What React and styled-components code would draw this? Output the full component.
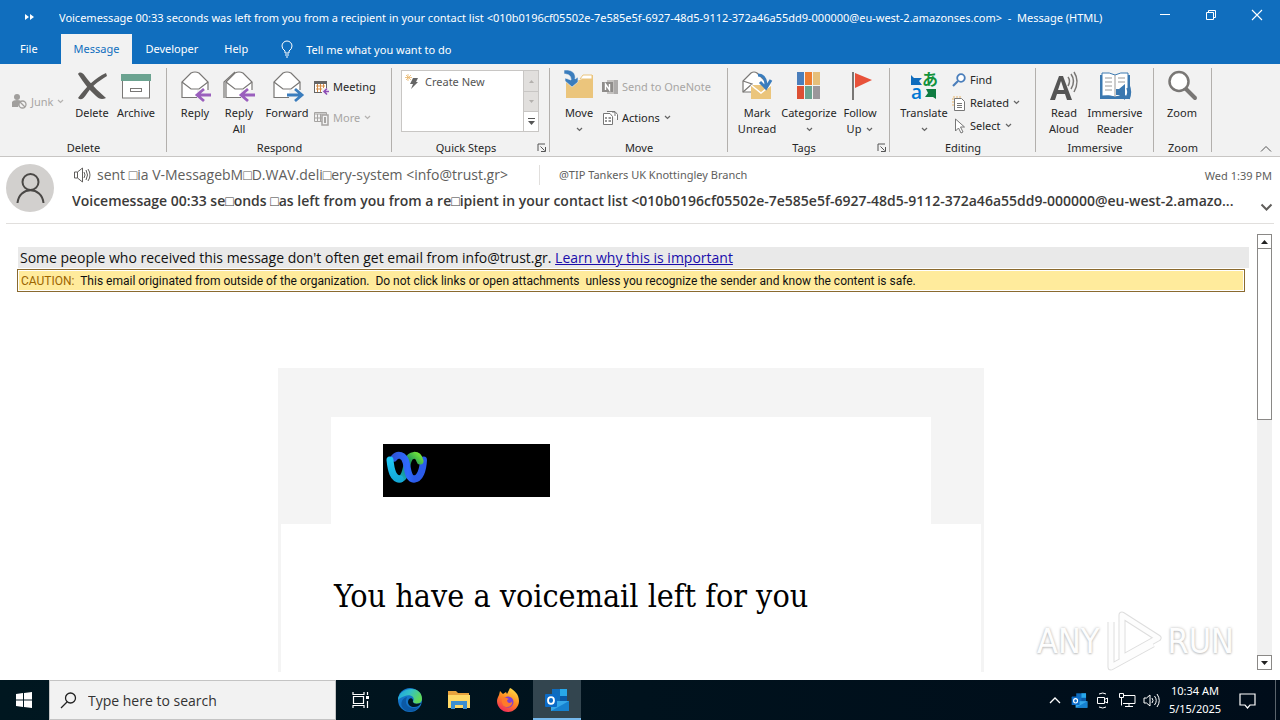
import React from "react";
import styled, { createGlobalStyle } from "styled-components";

const ui = `"Noto Sans", "Open Sans", sans-serif`;
const mail = `"Open Sans", "Noto Sans", sans-serif`;

const GlobalStyle = createGlobalStyle`
  *, *::before, *::after { box-sizing: border-box; }
  body { margin: 0; background: #fff; font-family: ${ui}; font-size: 11px; color: #262626; }
  button, input { font: inherit; color: inherit; background: none; border: 0; padding: 0; margin: 0; }
  svg { display: block; flex: none; overflow: visible; }
`;

const Page = styled.div`
  min-height: 100vh;
  display: flex;
  flex-direction: column;
`;

/* Title bar and tabs */
const TitleBar = styled.header`
  display: flex;
  height: 34px;
  background: #106ebe;
  color: #fff;
`;
const QuickAccess = styled.button`
  width: 59px;
  display: grid;
  place-items: center;
`;
const Title = styled.h1`
  flex: 1;
  min-width: 0;
  margin: 0;
  font-size: 11px;
  font-weight: 400;
  line-height: 36px;
  white-space: pre;
  overflow: hidden;
`;
const WindowButton = styled.button`
  width: 46px;
  height: 30px;
  display: grid;
  place-items: center;
`;
const Tabs = styled.nav`
  display: flex;
  height: 30px;
  padding-left: 7px;
  background: #106ebe;
  color: #fff;
`;
const Tab = styled.button`
  padding: 0 13px;
  line-height: 30px;
  background: ${(p) => (p.$active ? "#f2f2f2" : "transparent")};
  color: ${(p) => (p.$active ? "#106ebe" : "#fff")};
  margin-left: ${(p) => (p.$active ? "10px" : "0")};
`;
const TellMe = styled.button`
  display: flex;
  align-items: center;
  gap: 13px;
  padding: 0 20px;
`;

/* Ribbon */
const Ribbon = styled.section`
  display: flex;
  height: 93px;
  background: #f2f2f2;
  border-bottom: 1px solid #c8c6c4;
`;
const Group = styled.section`
  position: relative;
  display: flex;
  flex-direction: column;
  width: ${(p) => p.$width}px;
  padding-top: 4px;
  &::after {
    content: "";
    position: absolute;
    right: 0;
    top: 4px;
    bottom: 4px;
    width: 1px;
    background: #b3b0ad;
  }
`;
const GroupBody = styled.div`
  display: flex;
  flex: 1;
  padding-left: ${(p) => p.$inset || 6}px;
`;
const GroupFooter = styled.div`
  display: flex;
  height: 16px;
  line-height: 16px;
  padding: 0 3px;
`;
const GroupName = styled.h2`
  flex: 1;
  margin: 0;
  font-size: 11px;
  font-weight: 400;
  text-align: center;
`;
const Launcher = styled.button`
  display: grid;
  place-items: center;
`;
const BigButton = styled.button`
  width: ${(p) => p.$width || 44}px;
  display: flex;
  flex-direction: column;
  align-items: center;
  padding-top: 2px;
  line-height: 16px;
  white-space: nowrap;
  > svg { margin-bottom: 3px; }
`;
const SecondLine = styled.span`
  display: flex;
  align-items: center;
  gap: 5px;
  height: 16px;
`;
const Stack = styled.div`
  display: flex;
  flex-direction: column;
  padding: ${(p) => (p.$dense ? "0" : "3px 0")};
`;
const SmallButton = styled.button`
  display: flex;
  align-items: center;
  gap: 4px;
  height: ${(p) => (p.$dense ? 23 : 31)}px;
  color: ${(p) => (p.disabled ? "#a8a6a4" : "inherit")};
  white-space: nowrap;
`;
const JunkCell = styled.div`
  display: flex;
  align-items: center;
  padding-bottom: 6px;
  width: 59px;
`;
const Gallery = styled.div`
  display: flex;
  width: 138px;
  height: 62px;
  margin-top: 2px;
  background: #fff;
  border: 1px solid #c8c6c4;
`;
const GalleryItem = styled.button`
  flex: 1;
  display: flex;
  align-items: center;
  gap: 4px;
  height: 21px;
  padding-left: 3px;
  color: #555;
`;
const GallerySteps = styled.div`
  display: grid;
  grid-template-rows: repeat(3, 1fr);
  width: 15px;
  border-left: 1px solid #c8c6c4;
`;
const GalleryStep = styled.button`
  display: grid;
  place-items: center;
  background: ${(p) => (p.disabled ? "#e1dfdd" : "#fff")};
  & + & { border-top: 1px solid #c8c6c4; }
`;
const Collapse = styled.button`
  align-self: flex-end;
  margin-left: auto;
  padding: 0 8px 3px;
`;

/* Message header */
const MessageHeader = styled.section`
  display: flex;
  gap: 18px;
  margin-left: 6px;
  margin-right: 6px;
  height: 67px;
  border-bottom: 1px solid #e1dfdd;
`;
const Avatar = styled.div`
  width: 48px;
  height: 48px;
  margin-top: 7px;
  border-radius: 50%;
  background: #d2d0ce;
  display: grid;
  place-items: center;
`;
const HeaderText = styled.div`
  flex: 1;
  min-width: 0;
  padding-top: 5px;
`;
const HeaderLine = styled.div`
  display: flex;
  align-items: center;
  height: 26px;
`;
const Sender = styled.span`
  margin-left: 5px;
  font: 14px/24px ${mail};
  color: #605e5c;
  white-space: nowrap;
`;
const Recipient = styled.span`
  margin-left: 31px;
  padding-left: 19px;
  line-height: 20px;
  border-left: 1px solid #e1dfdd;
  color: #605e5c;
`;
const Sent = styled.time`
  margin-left: auto;
  padding-right: 2px;
  color: #605e5c;
`;
const Subject = styled.h2`
  flex: 1;
  min-width: 0;
  margin: 0;
  font: 600 14px/26px ${mail};
  color: #3b3a39;
  white-space: nowrap;
  overflow: hidden;
  text-overflow: ellipsis;
`;
const Expand = styled.button`
  margin-left: 12px;
  padding: 13px 1px 0 0;
`;

/* Message body */
const Reading = styled.main`
  position: relative;
  flex: 1;
  display: flex;
  padding-bottom: 8px;
`;
const MailBody = styled.article`
  flex: 1;
  min-width: 0;
  display: flex;
  flex-direction: column;
  padding: 23px 8px 0 17px;
`;
const SafetyTip = styled.p`
  margin: 0 0 0 1px;
  padding: 1px 0 0 2px;
  background: #e9e9e9;
  color: #111;
  font: 14px/20px ${mail};
  a { color: #1a0dab; }
`;
const Caution = styled.p`
  margin: 1px 4px 0 0;
  padding: 1px;
  border: 1px solid #8a6a2f;
  color: #111;
  font: 12px/18px Roboto, sans-serif;
  white-space: pre-wrap;
`;
const CautionFill = styled.span`
  display: block;
  padding: 1px 0 0 2px;
  background: #ffeb9c;
`;
const CautionLabel = styled.span`
  color: #9c6500;
`;
const Card = styled.section`
  flex: 1;
  align-self: center;
  width: 706px;
  max-width: 100%;
  margin-top: 76px;
  margin-right: 4px;
  display: flex;
  flex-direction: column;
  background: #f4f4f4;
`;
const Banner = styled.div`
  margin: 49px 53px 0;
  padding: 27px 52px;
  background: #fff;
`;
const Logo = styled.div`
  width: 167px;
  height: 53px;
  padding: 6px 3px;
  background: #000;
`;
const CardBody = styled.div`
  flex: 1;
  margin: 0 3px;
  padding: 48px 53px 52px;
  background: #fff;
`;
const Headline = styled.h3`
  margin: 0;
  font: 400 32px/48px "DejaVu Serif Condensed", "DejaVu Serif", serif;
  color: #000;
`;
const ScrollBar = styled.div`
  display: flex;
  flex-direction: column;
  width: 15px;
  margin: 10px 8px 2px 0;
  background: #f1f1f1;
`;
const ScrollArrow = styled.button`
  display: grid;
  place-items: center;
  height: 15px;
  background: #fff;
  border: 1px solid #8a8886;
`;
const Track = styled.div`
  flex: 1;
`;
const Thumb = styled.div`
  height: 42%;
  background: #fff;
  border: 1px solid #8a8886;
  border-top: 0;
`;
const Watermark = styled.div`
  position: absolute;
  right: 46px;
  bottom: 8px;
  display: flex;
  align-items: center;
  gap: 5px;
  font: 34px/60px "DejaVu Sans Condensed", "DejaVu Sans", sans-serif;
  color: #fdfdfd;
  text-shadow: 0 0 3px #bbb, 0 1px 2px #ccc;
`;

/* Taskbar */
const Taskbar = styled.footer`
  display: flex;
  height: 40px;
  background: linear-gradient(90deg, #001720, #000d1a);
  color: #fff;
`;
const TaskButton = styled.button`
  width: 48px;
  margin-right: 1px;
  display: grid;
  place-items: center;
  background: ${(p) => (p.$active ? "#33454f" : "transparent")};
  box-shadow: ${(p) => (p.$active ? "inset 0 -2px #76b9ed" : "none")};
`;
const SearchBox = styled.label`
  display: flex;
  align-items: center;
  gap: 11px;
  width: 287px;
  margin-right: 1px;
  padding-left: 10px;
  background: #f2f2f2;
  border: 1px solid #c4c4c4;
  color: #222;
`;
const SearchInput = styled.input`
  flex: 1;
  min-width: 0;
  height: 36px;
  font: 14px/20px ${mail};
  &::placeholder { color: #333; opacity: 1; }
`;
const Tray = styled.div`
  display: flex;
  margin-left: auto;
  padding-right: 4px;
`;
const TrayButton = styled.button`
  width: ${(p) => p.$width || 24}px;
  display: grid;
  place-items: center;
`;
const Clock = styled.time`
  width: 64px;
  padding-top: 2px;
  line-height: 18px;
  text-align: center;
`;
const ShowDesktop = styled.div`
  width: 9px;
  border-right: 1px solid #5a646c;
`;

/* Icons */
const Down = ({ c = "#666", w = 7 }) => (
  <svg width={w} height="5" viewBox="0 0 7 5"><path d="M1 1l2.5 2.4L6 1" fill="none" stroke={c} strokeWidth="1.3" /></svg>
);
const Ico = ({ s = 32, children, ...r }) => (
  <svg width={s} height={s} viewBox={`0 0 ${s} ${s}`} fill="none" {...r}>{children}</svg>
);
const DeleteIcon = () => (
  <Ico><path d="M2 4c2-3 5-1 7 2 6 8 12 14 21 22-4 2-7 1-10-2C13 20 8 13 2 4z" fill="#5d5b59" /><path d="M30 3C19 8 10 17 2 28c3 3 6 0 8-3C15 17 21 12 31 6z" fill="#5d5b59" /></Ico>
);
const ArchiveIcon = () => (
  <Ico><rect x="2.5" y="9" width="27" height="19" fill="#fff" stroke="#797775" /><rect x="1" y="4" width="30" height="7" fill="#6ba390" /><rect x="10.5" y="18.5" width="11" height="3" stroke="#797775" /></Ico>
);
const Envelope = ({ all, color, back }) => (
  <Ico>
    {all && <path d="M1 28V12L12 2" stroke="#797775" strokeWidth="1.2" />}
    <path d="M3 12v15.5h26V12L20 3q-4-2-8 0z" fill="#fff" stroke="#797775" strokeWidth="1.2" />
    <path d="M3 12l9 7h8l9-7" stroke="#797775" strokeWidth="1.2" />
    <path d="M18 20h14v10H18z" fill="#f2f2f2" />
    {back
      ? <path d="M32 25H19m6-6l-7 6 7 6" stroke={color} strokeWidth="2.8" />
      : <path d="M16 25h14m-6-6l7 6-7 6" stroke={color} strokeWidth="2.8" />}
  </Ico>
);
const JunkIcon = () => (
  <Ico s={16}><circle cx="6" cy="4" r="3" fill="#a19f9d" /><path d="M1 14V9q1-2 5-2 3 0 4 1l-3 6z" fill="#a19f9d" /><circle cx="11.5" cy="11.5" r="3.5" fill="#f2f2f2" stroke="#a19f9d" strokeWidth="1.3" /><path d="M9 9l5 5" stroke="#a19f9d" strokeWidth="1.3" /></Ico>
);
const MeetingIcon = () => (
  <Ico s={16}><rect x="1.5" y="2.5" width="12" height="11" fill="#fff" stroke="#666" /><path d="M1 2h13v3H1z" fill="#666" /><path d="M3 7h9M3 10h6M4.5 5v8M7.5 5v8M10.5 5v5" stroke="#d68c45" /><path d="M9 9h7v7H9z" fill="#f2f2f2" /><path d="M16 12.5h-5m3-3l-3 3 3 3" stroke="#8e4db5" strokeWidth="1.6" /></Ico>
);
const MoreIcon = () => (
  <Ico s={16}><path d="M1.5 2.5h12v9h-12zM1 4h13M1 8h8M4.5 4v7M7.5 4v7" stroke="#a6a4a2" /><path d="M9 5h6v10H9z" fill="#f2f2f2" stroke="#a6a4a2" strokeWidth="1.5" /><path d="M11 7h2v6h-2z" fill="#a6a4a2" /></Ico>
);
const FlashIcon = () => (
  <Ico s={16}><path d="M3 0v7M0 3.5h7M1 1l5 5M6 1L1 6" stroke="#e8b56a" strokeWidth=".8" /><path d="M8 4h5l-2 4h2l-7 7 2-5H5z" fill="#666" /></Ico>
);
const MoveIcon = () => (
  <Ico><path d="M3 28V10h15l4-5h8v23z" fill="#ebc57c" /><path d="M20 5h9v4H17z" fill="#fff" stroke="#ebc57c" /><path d="M1 0h4c6 1 8 5 7 9l3-2v5l-6 5-7-6V8l6 2c0-4-2-6-7-6z" fill="#3b7dbd" stroke="#f2f2f2" strokeWidth=".6" /></Ico>
);
const OneNoteIcon = () => (
  <Ico s={16}><path d="M5 1h11v14H5z" fill="#c3c1bf" /><path d="M12 1h4v14h-4z" fill="#adabaa" /><path d="M0 3h11v10H0z" fill="#8f8d8b" /><path d="M3.5 11V5l4 6V5" stroke="#fff" strokeWidth="1.4" /></Ico>
);
const ActionsIcon = () => (
  <Ico s={16}><path d="M5 1.5h8l2.5 3V10M1.5 3.5H8l2.5 3v8h-9z" fill="#fff" stroke="#777" /><path d="M3 8h2m1.5 0H9M3 11h2m1.5 0H9" stroke="#777" strokeWidth="1.5" /><path d="M10 2h3v4" stroke="#777" /></Ico>
);
const MarkIcon = () => (
  <Ico><path d="M2 22V11L10 3q3-2 6 0l9 9v10z" fill="#fff" stroke="#797775" strokeWidth="1.2" /><path d="M2 22l9-8-9-3" stroke="#797775" strokeWidth="1.2" /><path d="M10 15h20v14H10z" fill="#ebc57c" /><path d="M10 15l10 8 10-8" stroke="#fff" strokeWidth="1.5" /><path d="M17 5c6 0 8 4 8 12M19 12l6 6 5-8" stroke="#3b7dbd" strokeWidth="3" /></Ico>
);
const CategorizeIcon = () => (
  <Ico>{["#4a7ebb 4 2", "#ed7d31 12 2", "#e6bf7a 20 2", "#dc5034 4 16", "#6ba390 12 16", "#9b979b 20 16"].map((v) => { const [f, x, y] = v.split(" "); return <rect key={v} x={x} y={y} width="7" height="13" fill={f} />; })}</Ico>
);
const FlagIcon = () => (
  <Ico><path d="M9 2v28" stroke="#797775" strokeWidth="2" /><path d="M11 3l17 7-17 8z" fill="#e8523a" /></Ico>
);
const TranslateIcon = () => (
  <Ico>
    <path d="M3 5l3 3h8l-3 3 3 4H3z" fill="#0f6cbd" /><path d="M28 29l-3-2h-8l3-4-2-4h10z" fill="#107c41" />
    <text x="3" y="29" fontFamily="Open Sans" fontSize="19" fontWeight="600" fill="#0078d4">a</text>
    <text x="14" y="15" fontFamily="Noto Sans CJK JP" fontSize="16" fontWeight="700" fill="#13923b">あ</text>
  </Ico>
);
const FindIcon = () => (
  <Ico s={14}><circle cx="9" cy="5" r="3.8" fill="#fff" stroke="#4a7ebb" strokeWidth="1.8" /><path d="M6 8l-5 5" stroke="#4a7ebb" strokeWidth="2.2" /></Ico>
);
const RelatedIcon = () => (
  <Ico s={14}><path d="M1 10V1h8" stroke="#e8b56a" strokeDasharray="2 1" /><path d="M2.5 2.5h7l3 3v9h-10z" fill="#fff" stroke="#777" /><path d="M5 7.5h5m-5 2h5m-5 2h5" stroke="#777" /></Ico>
);
const SelectIcon = () => (
  <Ico s={14}><path d="M3.5 0v12l3-3 2.5 5 2-1-2.5-5h4z" fill="#fff" stroke="#777" /></Ico>
);
const ReadIcon = () => (
  <Ico><path d="M2 30L11 6h4l9 24h-5l-2-6H9l-2 6zm8-10h6l-3-9z" fill="#555" /><path d="M20 7q3 4 0 9M23 4q5 7 0 15M26 2q6 9 0 20" stroke="#797775" strokeWidth="1.5" /></Ico>
);
const ReaderIcon = () => (
  <Ico><path d="M1 5h30v24H1z" fill="#3b78b0" /><path d="M3 3q8-1 13 2 5-3 13-2v23q-8-1-13 1-5-2-13-1z" fill="#fff" stroke="#3b78b0" /><path d="M16 5v22M6 8h7M6 12h7M6 16h7M6 20h7M19 8h7M19 12h7" stroke="#999" /><path d="M17 19h3l6-5v16l-6-5h-3z" fill="#3b78b0" /><path d="M28 18q2 4 0 8M30 15q3 7 0 14" stroke="#3b78b0" strokeWidth="1.4" /></Ico>
);
const ZoomIcon = () => (
  <Ico><path d="M19 18l10 10" stroke="#797775" strokeWidth="4" strokeLinecap="round" /><circle cx="13" cy="11.5" r="9.5" fill="#fff" stroke="#797775" strokeWidth="2.5" /></Ico>
);
const LauncherIcon = () => (
  <Ico s={10}><path d="M1 8V1h7" stroke="#555" /><path d="M3.5 3.5l4 4M8.5 4v4.5H4" stroke="#555" /></Ico>
);
const OutlookIcon = ({ size = 26 }) => (
  <svg width={size} height={size} viewBox="0 0 26 26">
    <path d="M8 2h15v14H8z" fill="#0f6cbd" /><path d="M16 2h7v7h-7z" fill="#28a8ea" /><path d="M16 9h7v6h-7z" fill="#0a58a6" /><path d="M7 14h18v10H7z" fill="#35a7e8" /><path d="M7 24l18-10v10z" fill="#1681cf" />
    <rect x="1" y="7" width="12" height="13" rx="1" fill="#0b6bc7" /><ellipse cx="7" cy="13.5" rx="3" ry="3.3" fill="none" stroke="#fff" strokeWidth="1.8" />
  </svg>
);

const Big = ({ icon, label, second, menu, width }) => (
  <BigButton $width={width}>
    {icon}
    <span>{label}</span>
    {(second || menu) && <SecondLine>{second}{menu && <Down />}</SecondLine>}
  </BigButton>
);
const Small = ({ icon, label, menu, dense, disabled }) => (
  <SmallButton $dense={dense} disabled={disabled}>
    {icon}{label}{menu && <Down c={disabled ? "#b5b3b1" : "#666"} />}
  </SmallButton>
);
const RibbonGroup = ({ name, width, inset, launcher, children }) => (
  <Group $width={width} aria-label={name}>
    <GroupBody $inset={inset}>{children}</GroupBody>
    <GroupFooter>
      <GroupName>{name}</GroupName>
      {launcher && <Launcher aria-label={`${name} options`}><LauncherIcon /></Launcher>}
    </GroupFooter>
  </Group>
);

export default function App() {
  return (
    <Page>
      <GlobalStyle />
      <TitleBar>
        <QuickAccess aria-label="Customize toolbar">
          <svg width="9" height="6" viewBox="0 0 9 6"><path d="M0 0l4 3-4 3zM5 0l4 3-4 3z" fill="#fff" /></svg>
        </QuickAccess>
        <Title>{"Voicemessage 00:33 seconds was left from you from a recipient in your contact list <010b0196cf05502e-7e585e5f-6927-48d5-9112-372a46a55dd9-000000@eu-west-2.amazonses.com>  -  Message (HTML)"}</Title>
        <WindowButton aria-label="Minimize"><Ico s={12}><path d="M1 5.5h10" stroke="#fff" /></Ico></WindowButton>
        <WindowButton aria-label="Restore"><Ico s={12}><path d="M1.5 3.5h7v7h-7zM3.5 3V1.5h7v7H9" stroke="#fff" /></Ico></WindowButton>
        <WindowButton aria-label="Close"><Ico s={12}><path d="M1 1l10 10M11 1L1 11" stroke="#fff" strokeWidth="1.1" /></Ico></WindowButton>
      </TitleBar>
      <Tabs>
        <Tab>File</Tab>
        <Tab $active>Message</Tab>
        <Tab>Developer</Tab>
        <Tab>Help</Tab>
        <TellMe>
          <svg width="12" height="18" viewBox="0 0 12 18" fill="none" stroke="#fff"><path d="M4 13v-2Q1 9 1 6a5 5 0 0110 0q0 3-3 5v2zM4 15h4M5 17h2" /></svg>
          Tell me what you want to do
        </TellMe>
      </Tabs>

      <Ribbon>
        <RibbonGroup name="Delete" width={167} inset={11}>
          <JunkCell><Small icon={<JunkIcon />} label="Junk" menu disabled /></JunkCell>
          <Big icon={<DeleteIcon />} label="Delete" />
          <Big icon={<ArchiveIcon />} label="Archive" />
        </RibbonGroup>
        <RibbonGroup name="Respond" width={225}>
          <Big icon={<Envelope back color="#9a5fbd" />} label="Reply" />
          <Big icon={<Envelope back all color="#9a5fbd" />} label="Reply" second="All" />
          <Big icon={<Envelope color="#3b7dbd" />} label="Forward" width={52} />
          <Stack>
            <Small icon={<MeetingIcon />} label="Meeting" />
            <Small icon={<MoreIcon />} label="More" menu disabled />
          </Stack>
        </RibbonGroup>
        <RibbonGroup name="Quick Steps" width={158} inset={9} launcher>
          <Gallery>
            <GalleryItem><FlashIcon />Create New</GalleryItem>
            <GallerySteps>
              <GalleryStep disabled aria-label="Previous"><svg width="5" height="3" viewBox="0 0 5 3"><path d="M0 3l2.5-3L5 3z" fill="#b3b0ad" /></svg></GalleryStep>
              <GalleryStep disabled aria-label="Next"><svg width="5" height="3" viewBox="0 0 5 3"><path d="M0 0l2.5 3L5 0z" fill="#b3b0ad" /></svg></GalleryStep>
              <GalleryStep aria-label="All quick steps"><svg width="7" height="7" viewBox="0 0 7 7"><path d="M0 0h7v1H0zM0 3h7L3.5 7z" fill="#555" /></svg></GalleryStep>
            </GallerySteps>
          </Gallery>
        </RibbonGroup>
        <RibbonGroup name="Move" width={178}>
          <Big icon={<MoveIcon />} label="Move" menu width={46} />
          <Stack>
            <Small icon={<OneNoteIcon />} label="Send to OneNote" disabled />
            <Small icon={<ActionsIcon />} label="Actions" menu />
          </Stack>
        </RibbonGroup>
        <RibbonGroup name="Tags" width={162} launcher>
          <Big icon={<MarkIcon />} label="Mark" second="Unread" width={46} />
          <Big icon={<CategorizeIcon />} label="Categorize" menu width={58} />
          <Big icon={<FlagIcon />} label="Follow" second="Up" menu />
        </RibbonGroup>
        <RibbonGroup name="Editing" width={146}>
          <Big icon={<TranslateIcon />} label="Translate" menu width={56} />
          <Stack $dense>
            <Small dense icon={<FindIcon />} label="Find" />
            <Small dense icon={<RelatedIcon />} label="Related" menu />
            <Small dense icon={<SelectIcon />} label="Select" menu />
          </Stack>
        </RibbonGroup>
        <RibbonGroup name="Immersive" width={118}>
          <Big icon={<ReadIcon />} label="Read" second="Aloud" />
          <Big icon={<ReaderIcon />} label="Immersive" second="Reader" width={58} />
        </RibbonGroup>
        <RibbonGroup name="Zoom" width={58}>
          <Big icon={<ZoomIcon />} label="Zoom" />
        </RibbonGroup>
        <Collapse aria-label="Collapse ribbon"><svg width="12" height="8" viewBox="0 0 12 8" fill="none" stroke="#555"><path d="M1 6.5l5-5 5 5" /></svg></Collapse>
      </Ribbon>

      <MessageHeader>
        <Avatar>
          <svg width="29" height="30" viewBox="0 0 29 30" fill="none" stroke="#4a4846" strokeWidth="2"><circle cx="14.5" cy="9" r="8" /><path d="M1.5 30C3 13 26 13 27.5 30" /></svg>
        </Avatar>
        <HeaderText>
          <HeaderLine>
            <svg width="20" height="16" viewBox="0 0 20 16" fill="none" stroke="#605e5c"><path d="M2.5 5v6h3l5 4V1l-5 4zM5.5 5v6M12 5q2 3 0 6M14 3q3 5 0 10M16 2q4 6 0 12" /></svg>
            <Sender>sent □ia V-MessagebM□D.WAV.deli□ery-system &lt;info@trust.gr&gt;</Sender>
            <Recipient>@TIP Tankers UK Knottingley Branch</Recipient>
            <Sent>Wed 1:39 PM</Sent>
          </HeaderLine>
          <HeaderLine>
            <Subject>Voicemessage 00:33 se□onds □as left from you from a re□ipient in your contact list &lt;010b0196cf05502e-7e585e5f-6927-48d5-9112-372a46a55dd9-000000@eu-west-2.amazo...</Subject>
            <Expand aria-label="Expand header"><svg width="13" height="9" viewBox="0 0 13 9" fill="none" stroke="#605e5c" strokeWidth="2"><path d="M1.5 1.5l5 5 5-5" /></svg></Expand>
          </HeaderLine>
        </HeaderText>
      </MessageHeader>

      <Reading>
        <MailBody>
          <SafetyTip>Some people who received this message don't often get email from info@trust.gr. <a href="#learn">Learn why this is important</a></SafetyTip>
          <Caution><CautionFill><CautionLabel>CAUTION:</CautionLabel>{"  This email originated from outside of the organization.  Do not click links or open attachments  unless you recognize the sender and know the content is safe."}</CautionFill></Caution>
          <Card>
            <Banner>
              <Logo>
                <svg width="42" height="36" viewBox="0 0 42 36" fill="none" strokeWidth="7" strokeLinecap="round">
                  <defs>
                    <linearGradient id="cy" x1="0" y1="0" x2="0" y2="1"><stop stopColor="#1fc7f5" /><stop offset="1" stopColor="#14a9d8" /></linearGradient>
                    <linearGradient id="gr" gradientUnits="userSpaceOnUse" x1="14" y1="30" x2="35" y2="6"><stop stopColor="#17a9c9" /><stop offset=".6" stopColor="#128a5e" /><stop offset="1" stopColor="#6fe03a" /></linearGradient>
                    <linearGradient id="bl" x1="0" y1="0" x2="1" y2="0"><stop stopColor="#2f55d8" /><stop offset=".7" stopColor="#2f6bff" /><stop offset="1" stopColor="#2b5be8" /></linearGradient>
                  </defs>
                  <path d="M28 29C34 29 37 20 37.5 10" stroke="#2b5be8" />
                  <path d="M13 29C20 29 20 17 22 11 24 4 32 3 34 11" stroke="url(#gr)" />
                  <path d="M8 8C12 3 18 5 20 12 22 20 22 29 28 29" stroke="url(#bl)" />
                  <path d="M4 10C5 20 7 29 14 29" stroke="url(#cy)" />
                </svg>
              </Logo>
            </Banner>
            <CardBody>
              <Headline>You have a voicemail left for you</Headline>
            </CardBody>
          </Card>
        </MailBody>
        <ScrollBar>
          <ScrollArrow aria-label="Scroll up"><svg width="7" height="4" viewBox="0 0 7 4"><path d="M0 4l3.5-4L7 4z" fill="#222" /></svg></ScrollArrow>
          <Track><Thumb /></Track>
          <ScrollArrow aria-label="Scroll down"><svg width="7" height="4" viewBox="0 0 7 4"><path d="M0 0l3.5 4L7 0z" fill="#222" /></svg></ScrollArrow>
        </ScrollBar>
        <Watermark>
          <span>ANY</span>
          <svg width="58" height="62" viewBox="0 0 58 62" fill="none" strokeLinejoin="round"><g stroke="#dedede" strokeWidth="7"><path d="M18 5l36 23L18 48z" /><path d="M7 12v45l42-23" /></g><g stroke="#fdfdfd" strokeWidth="5"><path d="M18 5l36 23L18 48z" /><path d="M7 12v45l42-23" /></g></svg>
          <span>RUN</span>
        </Watermark>
      </Reading>

      <Taskbar>
        <TaskButton aria-label="Start"><svg width="16" height="16" viewBox="0 0 16 16" fill="#fff"><path d="M0 2l7-1v6.5H0zM8 1l8-1v7.5H8zM0 8.5h7V15l-7-1zM8 8.5h8V16l-8-1z" /></svg></TaskButton>
        <SearchBox>
          <Ico s={17}><circle cx="10.5" cy="6" r="5" stroke="#222" strokeWidth="1.3" /><path d="M7 10l-6 6" stroke="#222" strokeWidth="1.3" /></Ico>
          <SearchInput placeholder="Type here to search" aria-label="Type here to search" />
        </SearchBox>
        <TaskButton aria-label="Task view"><Ico s={18}><path d="M1 1v2.5h11V1M1 17v-2.5h11V17M1.5 5.5h10v7h-10zM15.5 1v3M15.5 10v7" stroke="#fff" strokeWidth="1.2" /><path d="M14 5h3v3h-3z" fill="#fff" /></Ico></TaskButton>
        <TaskButton aria-label="Edge">
          <svg width="26" height="26" viewBox="0 0 26 26">
            <defs><linearGradient id="eg" x1="0" y1="0" x2="1" y2=".4"><stop stopColor="#1a9ee0" /><stop offset=".5" stopColor="#33c0c8" /><stop offset="1" stopColor="#5fd85a" /></linearGradient></defs>
            <circle cx="13" cy="13" r="12" fill="#1474c8" />
            <path d="M1 13C1 0 25-3 25 12c0 5-7 6-9 3 3-5-3-8-8-6-4 1-6 3-7 4z" fill="url(#eg)" />
            <path d="M9 13c-1 6 5 10 13 7-5 6-13 6-17 0-2-5 1-9 5-10z" fill="#0c59a4" />
            <path d="M11 15c0-4 4-5 5-2-1 3 2 5 8 3-2 3-4 4-7 4s-6-2-6-5z" fill="#001720" />
          </svg>
        </TaskButton>
        <TaskButton aria-label="File Explorer"><svg width="22" height="20" viewBox="0 0 22 20"><path d="M0 1h8l2 2h11v14H0z" fill="#e8a33d" /><path d="M0 5h22v13H0z" fill="#ffd966" /><path d="M3 11h16v8h-4v-4H7v4H3z" fill="#3c8fd0" /></svg></TaskButton>
        <TaskButton aria-label="Firefox">
          <svg width="24" height="24" viewBox="0 0 24 24">
            <defs><linearGradient id="ff" x1=".8" y1="0" x2=".3" y2="1"><stop stopColor="#ffe14a" /><stop offset=".5" stopColor="#ff8a1f" /><stop offset="1" stopColor="#f2295b" /></linearGradient></defs>
            <path d="M3 7l1-4 3 3 3-2 1 2 3-6c4 2 9 6 9 13 0 6-5 11-11 11S1 19 1 13c0-2 1-4 2-6z" fill="url(#ff)" /><circle cx="12" cy="14" r="5.5" fill="#7c3fd6" /><path d="M6 10c3-1 5 0 7 1-3 1-2 3 0 4 2 0 3-1 3-2 1 4-2 6-5 6-4 0-6-4-5-9z" fill="#ff7a2a" />
          </svg>
        </TaskButton>
        <TaskButton $active aria-label="Outlook"><OutlookIcon /></TaskButton>
        <Tray>
          <TrayButton aria-label="Hidden icons"><svg width="12" height="8" viewBox="0 0 12 8" fill="none" stroke="#fff" strokeWidth="1.3"><path d="M1 7l5-5 5 5" /></svg></TrayButton>
          <TrayButton aria-label="Outlook"><OutlookIcon size={17} /></TrayButton>
          <TrayButton aria-label="Meet now"><Ico s={16} stroke="#fff"><path d="M2.5 5.5h7v6h-7zM9.5 7.5l3-1.5v5l-3-1.5M4 2q4-2 7 0M4 15q4 2 7 0" /></Ico></TrayButton>
          <TrayButton aria-label="Network"><Ico s={18} stroke="#fff"><path d="M5 4.5h12v8H5M11 12.5v3M7 15.5h8M1.5 2.5h4v4h-4zM3.5 6.5v8" /></Ico></TrayButton>
          <TrayButton aria-label="Volume"><Ico s={17} stroke="#fff"><path d="M1 6v5h2.5L7 14V3L3.5 6zM9 6q2 2.5 0 5M11.5 4q3.5 4.5 0 9M14 2q4.5 6.5 0 13" /></Ico></TrayButton>
          <Clock>10:34 AM<br />5/15/2025</Clock>
          <TrayButton $width={40} aria-label="Notifications"><Ico s={17} stroke="#fff"><path d="M1 2h15v11h-5l-2.5 3L6 13H1z" strokeWidth="1.2" /></Ico></TrayButton>
          <ShowDesktop />
        </Tray>
      </Taskbar>
    </Page>
  );
}
